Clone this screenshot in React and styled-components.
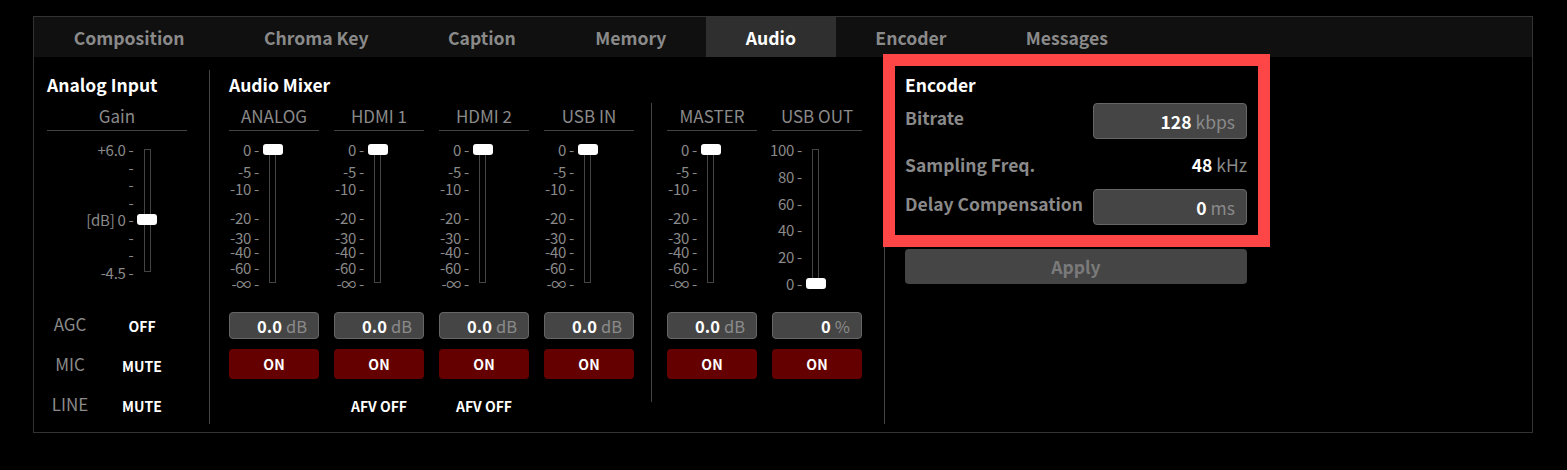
import React from 'react';
import styled, { createGlobalStyle } from 'styled-components';

const Global = createGlobalStyle`
  html, body { margin: 0; padding: 0; background: #000; }
  body { font-family: "Noto Sans CJK JP", "Noto Sans", sans-serif; color: #fff; }
  * { box-sizing: border-box; }
`;

const Page = styled.div`
  position: relative;
  width: 1567px;
  height: 470px;
  padding: 16px 0 0 33px;
`;

const Panel = styled.div`
  width: 1500px;
  height: 417px;
  border: 1px solid #333;
  display: flex;
  flex-direction: column;
`;

const TabBar = styled.div`
  display: flex;
  height: 40px;
  flex-shrink: 0;
  background: #101010;
`;

const Tab = styled.div`
  padding: 1px 39.7px 0;
  line-height: 39px;
  font-size: 17.6px;
  font-weight: 700;
  color: ${(p) => (p.$active ? '#fff' : '#8a8a8a')};
  background: ${(p) => (p.$active ? '#2f2f2f' : 'transparent')};
`;

const Content = styled.div`
  flex: 1;
  display: flex;
  padding: 13px 0 12px 13px;
`;

const Section = styled.div`
  display: flex;
  flex-direction: column;
  width: ${(p) => (p.$w ? `${p.$w}px` : 'auto')};
`;

const Title = styled.div`
  height: 30px;
  line-height: 30px;
  margin-bottom: 3px;
  font-size: 17.5px;
  font-weight: 700;
  color: #fff;
`;

const Divider = styled.div`
  width: 1px;
  background: #444;
  align-self: ${(p) => (p.$h ? 'flex-start' : 'stretch')};
  height: ${(p) => (p.$h ? `${p.$h}px` : 'auto')};
  margin: 0 ${(p) => p.$r}px 0 ${(p) => p.$l}px;
`;

const ColHeader = styled.div`
  height: 28px;
  line-height: 26px;
  text-align: center;
  font-size: 17px;
  color: #8a8a8a;
  border-bottom: 1px solid #444;
`;

const FaderBox = styled.div`
  display: flex;
  justify-content: center;
  padding-top: 18px;
  height: ${(p) => p.$h}px;
`;

const Rail = styled.div`
  position: relative;
  width: 7px;
  height: ${(p) => p.$h}px;
  border: 1px solid #444;
  margin-left: ${(p) => p.$ml}px;
  margin-right: ${(p) => p.$mr}px;
`;

const Tick = styled.div`
  position: absolute;
  right: calc(100% + 11px);
  transform: translateY(-50%);
  white-space: nowrap;
  font-size: 15px;
  line-height: 1;
  color: #8a8a8a;
  letter-spacing: -0.3px;
`;

const Thumb = styled.div`
  position: absolute;
  left: 50%;
  width: 20px;
  height: 11px;
  margin-left: -10px;
  background: #fff;
  border-radius: 3px;
`;

const MixerRow = styled.div`
  display: flex;
  align-items: flex-start;
`;

const ChannelGroup = styled.div`
  display: flex;
  gap: 15px;
`;

const Channel = styled.div`
  width: 90px;
  display: flex;
  flex-direction: column;
`;

const ValueBox = styled.div`
  height: ${(p) => p.$h || 27}px;
  width: ${(p) => (p.$w ? `${p.$w}px` : 'auto')};
  display: flex;
  align-items: center;
  justify-content: flex-end;
  padding-right: 11px;
  background: #454545;
  border: 1px solid #666;
  border-radius: 4px;
  font-size: ${(p) => p.$fs || 16.5}px;
`;

const Num = styled.span`
  font-weight: 700;
  color: #fff;
`;

const Unit = styled.span`
  margin-left: 4px;
  color: #8a8a8a;
`;

const OnButton = styled.div`
  margin-top: 10px;
  height: 30px;
  display: flex;
  align-items: center;
  justify-content: center;
  background: #650000;
  border-radius: 4px;
  font-size: 14px;
  font-weight: 700;
  color: #fff;
`;

const Afv = styled.div`
  margin-top: 16px;
  line-height: 22px;
  text-align: center;
  font-size: 14px;
  font-weight: 700;
  color: #fff;
`;

const AgcGrid = styled.div`
  display: grid;
  grid-template-columns: 46px 98px;
  grid-auto-rows: 40px;
  align-items: center;
`;

const AgcLabel = styled.div`
  text-align: center;
  font-size: 17px;
  color: #8a8a8a;
  padding-bottom: 1px;
`;

const AgcValue = styled.div`
  text-align: center;
  font-size: 14px;
  font-weight: 700;
  color: #fff;
  padding-top: 3px;
`;

const EncRow = styled.div`
  display: flex;
  justify-content: space-between;
  align-items: ${(p) => (p.$center ? 'center' : 'flex-start')};
  height: 36px;
  margin-bottom: 7px;
`;

const EncLabel = styled.div`
  font-size: 17.5px;
  font-weight: 700;
  line-height: 29px;
  color: #8a8a8a;
`;

const EncValue = styled.div`
  font-size: 17.5px;
`;

const ApplyButton = styled.div`
  margin-top: 17px;
  height: 35px;
  display: flex;
  align-items: center;
  justify-content: center;
  background: #454545;
  border-radius: 4px;
  font-size: 17.5px;
  font-weight: 700;
  color: #7a7a7a;
`;

const Highlight = styled.div`
  position: absolute;
  left: 883px;
  top: 54px;
  width: 387px;
  height: 193px;
  border: 12px solid #ff4646;
  pointer-events: none;
`;

const TABS = ['Composition', 'Chroma Key', 'Caption', 'Memory', 'Audio', 'Encoder', 'Messages'];

const DB_TICKS = [
  { label: '0', y: 0 },
  { label: '-5', y: 22 },
  { label: '-10', y: 39 },
  { label: '-20', y: 68 },
  { label: '-30', y: 88 },
  { label: '-40', y: 102 },
  { label: '-60', y: 118 },
  { label: '-∞', y: 134 },
];

const PCT_TICKS = ['100', '80', '60', '40', '20', '0'].map((label, i) => ({ label, y: i * 26.8 }));

const GAIN_TICKS = ['+6.0', '', '', '', '[dB] 0', '', '', '-4.5'].map((label, i) => ({
  label,
  y: (i * 123) / 7,
}));

function Fader({ ticks, railH, thumb, h, ml = 0, mr = 3 }) {
  return (
    <FaderBox $h={h}>
      <Rail $h={railH} $ml={ml} $mr={mr}>
        {ticks.map((t, i) => (
          <Tick key={i} style={{ top: t.y - 1 }}>
            {t.label ? `${t.label} -` : '-'}
          </Tick>
        ))}
        <Thumb style={{ top: thumb - 6.5 }} />
      </Rail>
    </FaderBox>
  );
}

function MixChannel({ name, ticks, thumb, value, unit, afv }) {
  return (
    <Channel>
      <ColHeader>{name}</ColHeader>
      <Fader ticks={ticks} railH={134} thumb={thumb} h={181} />
      <ValueBox>
        <Num>{value}</Num>
        <Unit>{unit}</Unit>
      </ValueBox>
      <OnButton>ON</OnButton>
      {afv && <Afv>AFV OFF</Afv>}
    </Channel>
  );
}

export default function App() {
  return (
    <>
      <Global />
      <Page>
        <Panel>
          <TabBar>
            {TABS.map((t) => (
              <Tab key={t} $active={t === 'Audio'}>
                {t}
              </Tab>
            ))}
          </TabBar>
          <Content>
            <Section $w={140}>
              <Title>Analog Input</Title>
              <ColHeader>Gain</ColHeader>
              <Fader ticks={GAIN_TICKS} railH={123} thumb={(4 * 123) / 7} h={173} ml={60} mr={0} />
              <AgcGrid>
                <AgcLabel>AGC</AgcLabel>
                <AgcValue>OFF</AgcValue>
                <AgcLabel>MIC</AgcLabel>
                <AgcValue>MUTE</AgcValue>
                <AgcLabel>LINE</AgcLabel>
                <AgcValue>MUTE</AgcValue>
              </AgcGrid>
            </Section>
            <Divider $l={22} $r={19} />
            <Section>
              <Title>Audio Mixer</Title>
              <MixerRow>
                <ChannelGroup>
                  <MixChannel name="ANALOG" ticks={DB_TICKS} thumb={0} value="0.0" unit="dB" />
                  <MixChannel name="HDMI 1" ticks={DB_TICKS} thumb={0} value="0.0" unit="dB" afv />
                  <MixChannel name="HDMI 2" ticks={DB_TICKS} thumb={0} value="0.0" unit="dB" afv />
                  <MixChannel name="USB IN" ticks={DB_TICKS} thumb={0} value="0.0" unit="dB" />
                </ChannelGroup>
                <Divider $l={17} $r={15} $h={299} />
                <ChannelGroup>
                  <MixChannel name="MASTER" ticks={DB_TICKS} thumb={0} value="0.0" unit="dB" />
                  <MixChannel name="USB OUT" ticks={PCT_TICKS} thumb={134} value="0" unit="%" />
                </ChannelGroup>
              </MixerRow>
            </Section>
            <Divider $l={22} $r={20} />
            <Section $w={342}>
              <Title>Encoder</Title>
              <EncRow>
                <EncLabel>Bitrate</EncLabel>
                <ValueBox $w={154} $h={36} $fs={17.5}>
                  <Num>128</Num>
                  <Unit>kbps</Unit>
                </ValueBox>
              </EncRow>
              <EncRow $center>
                <EncLabel>Sampling Freq.</EncLabel>
                <EncValue>
                  <Num>48</Num>
                  <Unit>kHz</Unit>
                </EncValue>
              </EncRow>
              <EncRow>
                <EncLabel>Delay Compensation</EncLabel>
                <ValueBox $w={154} $h={36} $fs={17.5}>
                  <Num>0</Num>
                  <Unit>ms</Unit>
                </ValueBox>
              </EncRow>
              <ApplyButton>Apply</ApplyButton>
            </Section>
          </Content>
        </Panel>
        <Highlight />
      </Page>
    </>
  );
}
